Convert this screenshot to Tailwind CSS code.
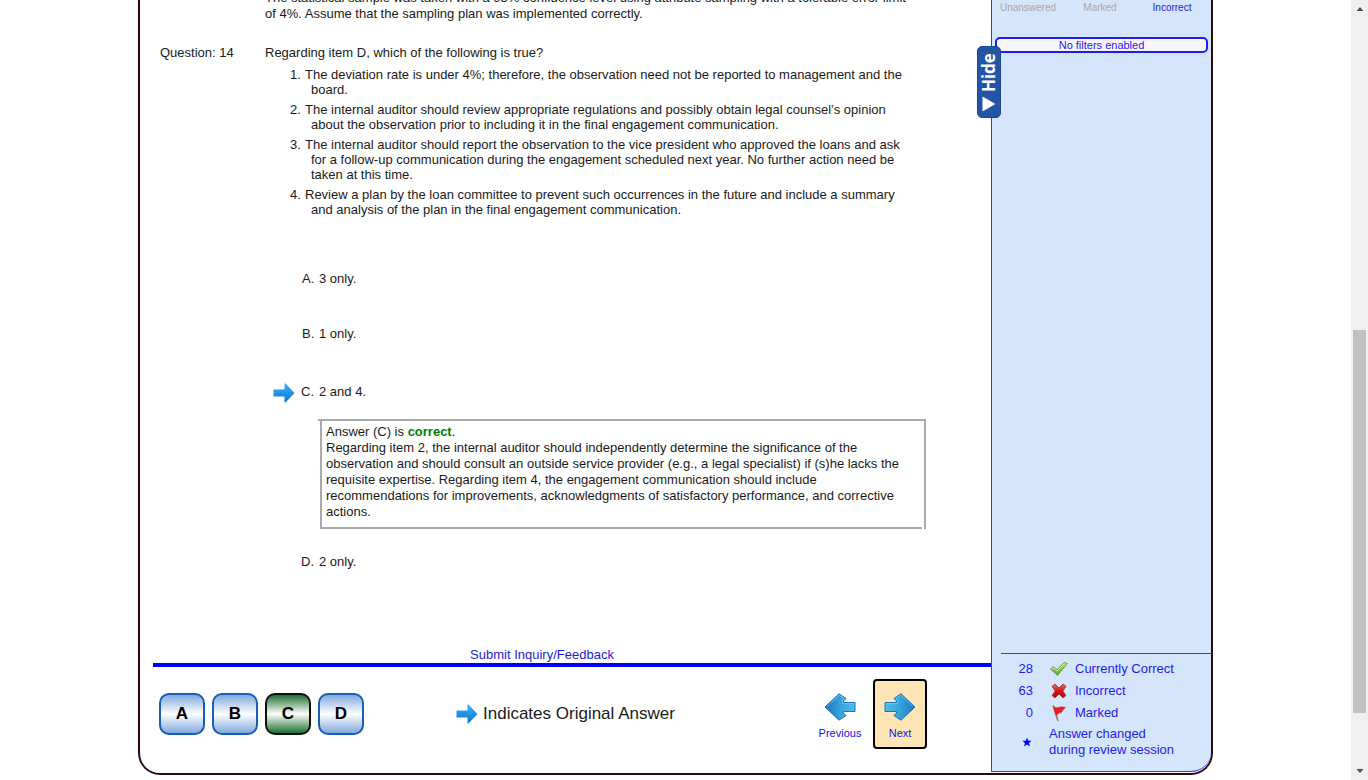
<!DOCTYPE html>
<html lang="en">
<head>
<meta charset="utf-8">
<meta name="viewport" content="width=device-width, initial-scale=1">
<title>Review Session</title>
<script src="https://cdn.jsdelivr.net/npm/@tailwindcss/browser@4"></script>
</head>
<body class="flex h-screen overflow-hidden bg-white font-['Liberation_Sans',Arial,sans-serif] text-[13px] leading-[16px] text-[#1a1a1a]">
<svg class="absolute size-0" aria-hidden="true">
  <defs>
    <linearGradient id="sky" x1="0" y1="0" x2="0" y2="1"><stop offset="0" stop-color="#35b6f5"/><stop offset="0.55" stop-color="#1e90e6"/><stop offset="1" stop-color="#1673d0"/></linearGradient>
    <linearGradient id="nav" x1="0" y1="0" x2="1" y2="0"><stop offset="0" stop-color="#4cc0ec"/><stop offset="0.5" stop-color="#35a3dd"/><stop offset="1" stop-color="#1c76bb"/></linearGradient>
    <linearGradient id="navback" x1="1" y1="0" x2="0" y2="0"><stop offset="0" stop-color="#4cc0ec"/><stop offset="0.5" stop-color="#35a3dd"/><stop offset="1" stop-color="#1c76bb"/></linearGradient>
    <linearGradient id="green" x1="0" y1="0" x2="0" y2="1"><stop offset="0" stop-color="#b5e86a"/><stop offset="1" stop-color="#4da82c"/></linearGradient>
    <linearGradient id="red" x1="0" y1="0" x2="0" y2="1"><stop offset="0" stop-color="#f06a60"/><stop offset="0.5" stop-color="#d81616"/><stop offset="1" stop-color="#a80808"/></linearGradient>
    <symbol id="marker" viewBox="0 0 22 20"><path d="M0.500 6.500H11.500V0.500H12.500L21.500 10L12.500 19.500H11.500V13.500H0.500Z" fill="url(#sky)"/></symbol>
  </defs>
</svg>

<div class="min-w-0 flex-1">
  <div class="relative mx-auto flex w-full max-w-[1075px] overflow-hidden rounded-b-[22px] border-x-2 border-b-2 border-[#300808] pb-px">
    <main class="min-w-0 flex-1 pl-[13px]">
      <article class="-mt-[10px] pr-16 pl-[7px]">
        <p class="ml-[105px]">The statistical sample was taken with a 95% confidence level using attribute sampling with a tolerable error limit<br>of 4%. Assume that the sampling plan was implemented correctly.</p>
        <div class="mt-[23px] flex">
          <h1 class="w-[105px] shrink-0">Question: 14</h1>
          <p>Regarding item D, which of the following is true?</p>
        </div>
        <ol class="mt-[6px] ml-[130px] flex flex-col gap-[5px] leading-[15px]">
          <li class="flex"><span class="w-[15px] shrink-0">1.</span><p class="pl-[6px] -indent-[6px]">The deviation rate is under 4%; therefore, the observation need not be reported to management and the<br>board.</p></li>
          <li class="flex"><span class="w-[15px] shrink-0">2.</span><p class="pl-[6px] -indent-[6px]">The internal auditor should review appropriate regulations and possibly obtain legal counsel’s opinion<br>about the observation prior to including it in the final engagement communication.</p></li>
          <li class="flex"><span class="w-[15px] shrink-0">3.</span><p class="pl-[6px] -indent-[6px]">The internal auditor should report the observation to the vice president who approved the loans and ask<br>for a follow-up communication during the engagement scheduled next year. No further action need be<br>taken at this time.</p></li>
          <li class="flex"><span class="w-[15px] shrink-0">4.</span><p class="pl-[6px] -indent-[6px]">Review a plan by the loan committee to prevent such occurrences in the future and include a summary<br>and analysis of the plan in the final engagement communication.</p></li>
        </ol>
        <ul class="mt-[54px] ml-[112px]">
          <li class="flex items-center pl-[30px]"><span class="w-[17px]">A.</span>3 only.</li>
          <li class="mt-[39px] flex items-center pl-[30px]"><span class="w-[17px]">B.</span>1 only.</li>
          <li class="mt-10">
            <div class="flex h-5 items-center"><svg class="mt-[2px] mr-[6px] ml-px h-5 w-[22px]" role="img" aria-label="Original answer"><use href="#marker"/></svg><span class="w-[18px]">C.</span>2 and 4.</div>
            <section class="relative mt-[17px] mr-px ml-12 border-x-2 border-[#aaa] px-1 pt-[5px] pb-[9px]">
              <span class="absolute top-0 right-0 -left-1 h-[2px] bg-[#aaa]"></span>
              <p>Answer (C) is <b class="text-[#008000]">correct</b>.<br>Regarding item 2, the internal auditor should independently determine the significance of the<br>observation and should consult an outside service provider (e.g., a legal specialist) if (s)he lacks the<br>requisite expertise. Regarding item 4, the engagement communication should include<br>recommendations for improvements, acknowledgments of satisfactory performance, and corrective<br>actions.</p>
              <span class="absolute right-[2px] bottom-0 left-0 h-[2px] bg-[#aaa]"></span>
            </section>
          </li>
          <li class="mt-[25px] flex items-center pl-[29px]"><span class="w-[18px]">D.</span>2 only.</li>
        </ul>
      </article>

      <div class="mt-[77px] border-b-4 border-[#0000ff] text-center">
        <a href="#feedback" class="mr-[60px] inline-block text-[#1c1cd8]">Submit Inquiry/Feedback</a>
      </div>
      <footer class="flex items-center pt-3 pr-16 pb-[23px] pl-[6px]">
        <div class="flex gap-[7px] text-[17px] font-bold text-black">
          <button class="h-[42px] w-[46px] rounded-[10px] border-2 border-[#1460b4] bg-linear-to-b from-[#82a9dc] via-white to-[#82a9dc]">A</button>
          <button class="h-[42px] w-[46px] rounded-[10px] border-2 border-[#1460b4] bg-linear-to-b from-[#82a9dc] via-white to-[#82a9dc]">B</button>
          <button class="h-[42px] w-[46px] rounded-[10px] border-2 border-[#101010] bg-linear-to-b from-[#0b7035] via-white to-[#0b7035]">C</button>
          <button class="h-[42px] w-[46px] rounded-[10px] border-2 border-[#1460b4] bg-linear-to-b from-[#82a9dc] via-white to-[#82a9dc]">D</button>
        </div>
        <p class="ml-[92px] flex items-center gap-[5px] text-[17px] leading-5"><svg class="h-5 w-[22px]" aria-hidden="true"><use href="#marker"/></svg>Indicates Original Answer</p>
        <nav class="ml-auto flex gap-[6px] text-[11px] text-[#1010ee]">
          <button class="flex h-[70px] w-[54px] flex-col items-center pt-[14px]"><svg class="h-7 w-8" viewBox="0 0 32 28" aria-hidden="true"><path d="M31 9.500H19.500V8L22 5.500L15 0.800L1 14L15 27.200L22 22.500L19.500 20V18.500H31Z" fill="url(#navback)" stroke="#1b72b4"/><path d="M30 10.500H18.500V7.500L20.200 5.600L15 2.200L3 13.500" fill="none" stroke="#7fd3f5" stroke-opacity=".6"/></svg><span class="mt-1">Previous</span></button>
          <button class="flex h-[70px] w-[54px] flex-col items-center rounded-[4px] border-2 border-black bg-[#ffe4b5] pt-3"><svg class="h-7 w-8" viewBox="0 0 32 28" aria-hidden="true"><path d="M1 9.500H12.500V8L10 5.500L17 0.800L31 14L17 27.200L10 22.500L12.500 20V18.500H1Z" fill="url(#nav)" stroke="#1b72b4"/><path d="M2 10.500H13.500V7.500L11.800 5.600L17 2.200L29 13.500" fill="none" stroke="#7fd3f5" stroke-opacity=".6"/></svg><span class="mt-1">Next</span></button>
        </nav>
      </footer>
    </main>

    <aside class="relative flex w-[220px] shrink-0 flex-col rounded-br-[20px] border-b border-l border-[#3a3af0] bg-[#d5e5fb] text-[#1c1ce6]">
      <div class="grid grid-cols-3 pr-[3px] text-center text-[10px]">
        <button class="text-[#aaa9a0]" disabled>Unanswered</button>
        <button class="text-[#aaa9a0]" disabled>Marked</button>
        <button>Incorrect</button>
      </div>
      <p class="mx-[3px] mt-[21px] rounded-[5px] border-2 border-[#1c1cf0] bg-[#f8f5ff] text-center text-[11px] leading-[12px]">No filters enabled</p>
      <button class="absolute top-[46px] -left-[15px] flex h-[72px] w-6 flex-col items-center rounded-[5px] border border-[#1a4690] bg-[#2255a4] pt-[6px] text-white">
        <span class="rotate-180 font-['Noto_Sans',sans-serif] text-[17px] leading-[22px] font-bold [writing-mode:vertical-rl]">Hide</span>
        <svg class="mt-1 h-4 w-[14px]" viewBox="0 0 14 16" aria-hidden="true"><path d="M0.500 0.500L13.500 8L0.500 15.500Z" fill="#fff"/></svg>
      </button>
      <div class="mt-auto ml-[9px] border-t border-[#3a3af0] pt-[5px] pb-[13px]">
        <dl class="flex flex-col gap-[2px] leading-5">
          <div class="flex items-center"><dd class="w-8 text-right">28</dd><dt class="ml-4 flex items-center gap-[6px]">
            <svg class="h-[18px] w-5" viewBox="0 0 20 18" aria-hidden="true"><path d="M1.500 9L4.500 6.500L8 9.800L15 2.500L18.500 3.500L8.500 15.500Z" fill="url(#green)" stroke="#6a9a48" stroke-width=".9" stroke-linejoin="round"/><path d="M3 9L4.600 7.700L8 11.200L15.300 3.700" fill="none" stroke="#e3fac0" stroke-opacity=".8"/></svg>Currently Correct</dt></div>
          <div class="flex items-center"><dd class="w-8 text-right">63</dd><dt class="ml-4 flex items-center gap-[6px]">
            <svg class="h-[18px] w-5" viewBox="0 0 20 18" aria-hidden="true"><path d="M3 4.500L6 2L10 6L14 2L17 4.500L13.800 9L17 13.500L14 16L10 12L6 16L3 13.500L6.200 9Z" fill="url(#red)" stroke="#a34444" stroke-width="1" stroke-linejoin="round"/></svg>Incorrect</dt></div>
          <div class="flex items-center"><dd class="w-8 text-right">0</dd><dt class="ml-4 flex items-center gap-[6px]">
            <svg class="h-[18px] w-5" viewBox="0 0 20 18" aria-hidden="true"><path d="M4.500 2L8.800 16.500" stroke="#a08038" stroke-width="1.500" stroke-linecap="round"/><path d="M4 2.500Q7 4.500 10 3.200Q13 2 16.500 3.500Q13 6.500 12.500 8.500Q9 8.500 7.200 12Z" fill="#e02020" stroke="#c84040" stroke-width=".6"/></svg>Marked</dt></div>
        </dl>
        <div class="mt-[3px] flex items-center">
          <svg class="ml-[21px] h-[10px] w-[10px]" viewBox="0 0 10 10" aria-hidden="true"><path d="M5 .5L6.200 3.700L9.700 3.800L7 6L8 9.500L5 7.500L2 9.500L3 6L.3 3.800L3.800 3.700Z" fill="#00f"/></svg>
          <p class="ml-[17px]">Answer changed<br>during review session</p>
        </div>
      </div>
    </aside>
  </div>
</div>

<div class="flex w-[17px] shrink-0 flex-col items-center bg-[#f0f0f0]" aria-hidden="true">
  <svg class="mt-[5px] h-2 w-2 shrink-0" viewBox="0 0 8 8"><path d="M0.500 6L4 2L7.500 6Z" fill="#505050"/></svg>
  <div class="h-[317px]"></div>
  <div class="w-[13px] flex-1 bg-[#c1c1c1]"></div>
  <div class="h-[54px]"></div>
  <svg class="mb-[5px] h-2 w-2 shrink-0" viewBox="0 0 8 8"><path d="M0.500 2L4 6L7.500 2Z" fill="#505050"/></svg>
</div>
</body>
</html>
